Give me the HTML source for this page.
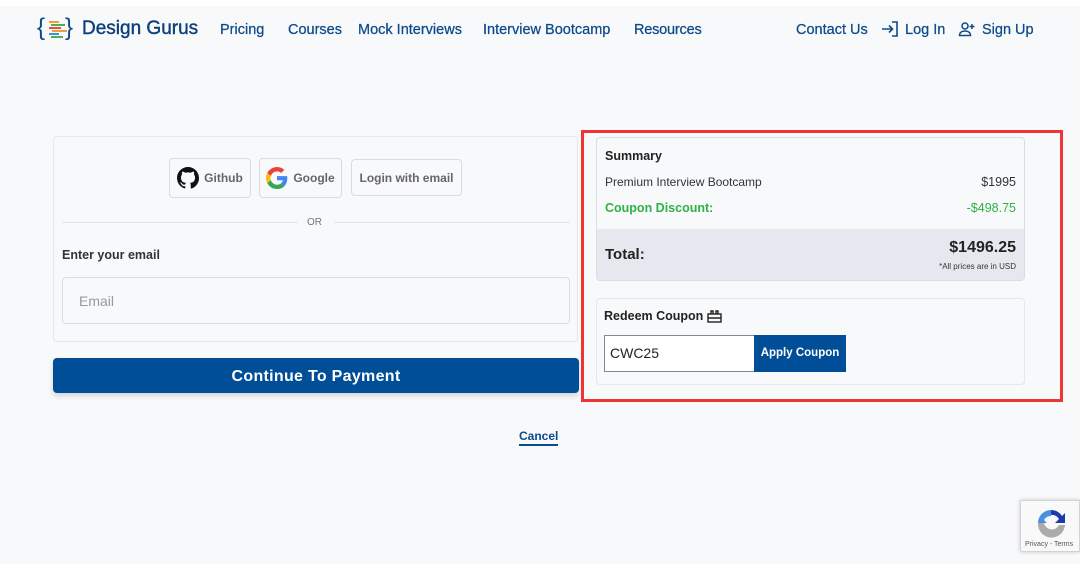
<!DOCTYPE html>
<html><head><meta charset="utf-8"><style>
*{box-sizing:border-box;margin:0;padding:0}
body{width:1080px;height:570px;background:#f8f9fb;font-family:"Liberation Sans",sans-serif;position:relative;overflow:hidden;color:#222}
.a{position:absolute}
.nav{color:#0d4a8a;font-size:14.5px;font-weight:500;top:22px;white-space:nowrap;-webkit-text-stroke:.25px #0d4a8a}
.btn{border:1px solid #d9dbdf;border-radius:4px;background:#f8f9fb;color:#666;font-size:12px;font-weight:bold;display:flex;align-items:center;justify-content:center;gap:5px}
</style></head><body>
<div class="a" style="left:0;top:0;width:1080px;height:6px;background:#fff"></div>
<div class="a" style="left:0;top:564px;width:1080px;height:6px;background:#fff"></div>
<!-- logo -->
<div class="a" style="left:37px;top:14px;font-size:24px;color:#0d4a8a;line-height:28px">{</div>
<div class="a" style="left:47px;top:20px;width:22px;height:18px">
<div style="height:2px;width:10px;background:#f39c3d;margin:1px 0 1px 2px"></div>
<div style="height:2px;width:14px;background:#4caf50;margin:0 0 1px 4px"></div>
<div style="height:2px;width:12px;background:#e74c3c;margin:0 0 1px 2px"></div>
<div style="height:2px;width:15px;background:#f39c3d;margin:0 0 1px 5px"></div>
<div style="height:2px;width:10px;background:#3498db;margin:0 0 1px 2px"></div>
<div style="height:2px;width:12px;background:#4caf50;margin:0 0 1px 4px"></div>
</div>
<div class="a" style="left:65px;top:14px;font-size:24px;color:#0d4a8a;line-height:28px">}</div>
<div class="a" style="left:82px;top:18px;font-size:19px;color:#0d3f7a;font-weight:500;-webkit-text-stroke:.4px #0d3f7a">Design Gurus</div>
<div class="a nav" style="left:220px">Pricing</div>
<div class="a nav" style="left:288px">Courses</div>
<div class="a nav" style="left:358px">Mock Interviews</div>
<div class="a nav" style="left:483px">Interview Bootcamp</div>
<div class="a nav" style="left:634px;letter-spacing:-.2px">Resources</div>
<div class="a nav" style="left:796px">Contact Us</div>
<svg class="a" style="left:881px;top:21px" width="18" height="16" viewBox="0 0 18 16" fill="none" stroke="#0d4a8a" stroke-width="1.6"><path d="M1 8h10M8 4.5l3.5 3.5L8 11.5M11 1h5v14h-5"/></svg>
<div class="a nav" style="left:905px">Log In</div>
<svg class="a" style="left:958px;top:21px" width="18" height="16" viewBox="0 0 18 16" fill="none" stroke="#0d4a8a" stroke-width="1.5"><circle cx="7" cy="5" r="3"/><path d="M1.5 14.5c0-3 2.5-4.5 5.5-4.5s5.5 1.5 5.5 4.5zM14 3v5M11.5 5.5h5"/></svg>
<div class="a nav" style="left:982px">Sign Up</div>

<!-- left card -->
<div class="a" style="left:53px;top:136px;width:525px;height:206px;border:1px solid #e6e7ea;border-radius:4px"></div>
<div class="a btn" style="left:169px;top:158px;width:82px;height:40px"><svg width="22" height="22" viewBox="0 0 16 16"><path fill="#111" d="M8 0C3.58 0 0 3.58 0 8c0 3.54 2.29 6.530 5.470 7.590.4.07.55-.17.55-.38v-1.33c-2.23.48-2.7-1.07-2.7-1.07-.36-.92-.89-1.17-.89-1.17-.73-.5.05-.49.05-.49.8.06 1.23.83 1.230.83.72 1.23 1.88.87 2.33.67.07-.52.28-.87.51-1.07-1.78-.2-3.64-.89-3.64-3.95 0-.87.31-1.59.82-2.15-.08-.2-.36-1.02.08-2.12 0 0 .67-.21 2.2.82.64-.18 1.32-.27 2-.27.68 0 1.36.09 2 .27 1.53-1.04 2.2-.82 2.2-.82.44 1.1.16 1.92.08 2.12.51.56.82 1.27.82 2.15 0 3.07-1.87 3.75-3.65 3.950.29.25.54.73.54 1.48v2.2c0 .21.15.46.55.38A8.01 8.01 0 0016 8c0-4.42-3.58-8-8-8z"/></svg>Github</div>
<div class="a btn" style="left:259px;top:158px;width:83px;height:40px"><svg width="22" height="22" viewBox="0 0 48 48"><path fill="#EA4335" d="M24 9.5c3.5 0 6.6 1.2 9.1 3.6l6.8-6.8C35.8 2.4 30.3 0 24 0 14.6 0 6.6 5.4 2.7 13.3l7.9 6.2C12.5 13.6 17.8 9.5 24 9.5z"/><path fill="#4285F4" d="M46.5 24.5c0-1.6-.1-3.1-.4-4.5H24v9h12.7c-.6 3-2.2 5.5-4.7 7.2l7.6 5.9c4.4-4.1 6.9-10.1 6.9-17.6z"/><path fill="#FBBC05" d="M10.5 28.7c-.5-1.4-.8-3-.8-4.7s.3-3.200.8-4.7l-7.9-6.2C1 16.5 0 20.1 0 24s1 7.5 2.7 10.7l7.8-6z"/><path fill="#34A853" d="M24 48c6.5 0 11.9-2.1 15.9-5.8l-7.6-5.9c-2.1 1.4-4.9 2.3-8.3 2.3-6.2 0-11.5-4.2-13.4-9.9l-7.9 6.1C6.6 42.6 14.6 48 24 48z"/></svg>Google</div>
<div class="a btn" style="left:351px;top:159px;width:111px;height:37px">Login with email</div>
<div class="a" style="left:62px;top:222px;width:236px;height:1px;background:#e3e4e7"></div>
<div class="a" style="left:307px;top:217px;font-size:10px;color:#777">OR</div>
<div class="a" style="left:334px;top:222px;width:236px;height:1px;background:#e3e4e7"></div>
<div class="a" style="left:62px;top:248px;font-size:12.5px;font-weight:bold;color:#333">Enter your email</div>
<div class="a" style="left:62px;top:277px;width:508px;height:47px;border:1px solid #dcdde0;border-radius:4px;background:#f8f9fb;font-size:14px;color:#999;padding:15px 0 0 16px">Email</div>
<div class="a" style="left:53px;top:358px;width:526px;height:35px;background:#014e98;border-radius:4px;color:#fff;font-size:16px;font-weight:bold;text-align:center;line-height:37px;letter-spacing:.3px;box-shadow:0 3px 6px rgba(0,0,0,.15)">Continue To Payment</div>
<div class="a" style="left:519px;top:429px;font-size:12px;font-weight:bold;color:#0d4a8a;border-bottom:2px solid #0d4a8a;padding-bottom:1px">Cancel</div>

<!-- right -->
<div class="a" style="left:581px;top:130px;width:482px;height:272px;border:3px solid #f03333"></div>
<div class="a" style="left:596px;top:137px;width:429px;height:144px;border:1px solid #d6dde6;border-radius:4px;overflow:hidden;background:#f8f9fb">
<div class="a" style="left:0;top:91px;width:429px;height:53px;background:#e5e9ef"></div>
<div class="a" style="left:8px;top:11px;font-size:12.5px;font-weight:bold;color:#222">Summary</div>
<div class="a" style="left:8px;top:37px;font-size:12px;color:#333">Premium Interview Bootcamp</div>
<div class="a" style="right:8px;top:37px;font-size:12.5px;color:#333">$1995</div>
<div class="a" style="left:8px;top:63px;font-size:12.5px;font-weight:bold;color:#2fb344">Coupon Discount:</div>
<div class="a" style="right:8px;top:63px;font-size:12.5px;color:#2fb344">-$498.75</div>
<div class="a" style="left:8px;top:108px;font-size:15px;font-weight:bold;color:#222">Total:</div>
<div class="a" style="right:8px;top:101px;font-size:16px;font-weight:bold;color:#222">$1496.25</div>
<div class="a" style="right:8px;top:124px;font-size:8px;color:#333">*All prices are in USD</div>
</div>
<div class="a" style="left:596px;top:298px;width:429px;height:87px;border:1px solid #e6e7ea;border-radius:4px"></div>
<div class="a" style="left:604px;top:309px;font-size:12.5px;font-weight:bold;color:#222">Redeem Coupon</div>
<svg class="a" style="left:707px;top:309px" width="15" height="14" viewBox="0 0 15 14" fill="none" stroke="#222" stroke-width="1.4"><rect x="1" y="5" width="13" height="8"/><path d="M1 9h13M4 5V2h2v3M9 5V2h2v3"/></svg>
<div class="a" style="left:604px;top:335px;width:151px;height:37px;border:1px solid #888;background:#fff;font-size:14px;color:#222;padding:9px 0 0 5px">CWC25</div>
<div class="a" style="left:754px;top:335px;width:92px;height:37px;background:#014e98;color:#fff;font-size:11.5px;font-weight:bold;text-align:center;line-height:37px">Apply Coupon</div>

<!-- recaptcha -->
<div class="a" style="left:1020px;top:500px;width:60px;height:52px;background:#f9f9f9;border:1px solid #d3d3d3;box-shadow:0 0 4px rgba(0,0,0,.2);border-radius:2px 0 0 2px">
<svg class="a" style="left:14px;top:6px" width="32" height="32" viewBox="0 0 32 32"><path d="M16 3a13 13 0 0 1 11 6l3-3v10H20l4-4a8 8 0 0 0-8-4z" fill="#1c3aa9"/><path d="M3 16A13 13 0 0 1 16 3v6a8 8 0 0 0-7 4l3 3H2z" fill="#4a90e2"/><path d="M3 16h6a8 8 0 0 0 15 2h6a13 13 0 0 1-27-2z" fill="#ababab"/></svg>
<div class="a" style="left:4px;top:40px;font-size:7px;color:#555;white-space:nowrap">Privacy - Terms</div>
</div>
</body></html>
